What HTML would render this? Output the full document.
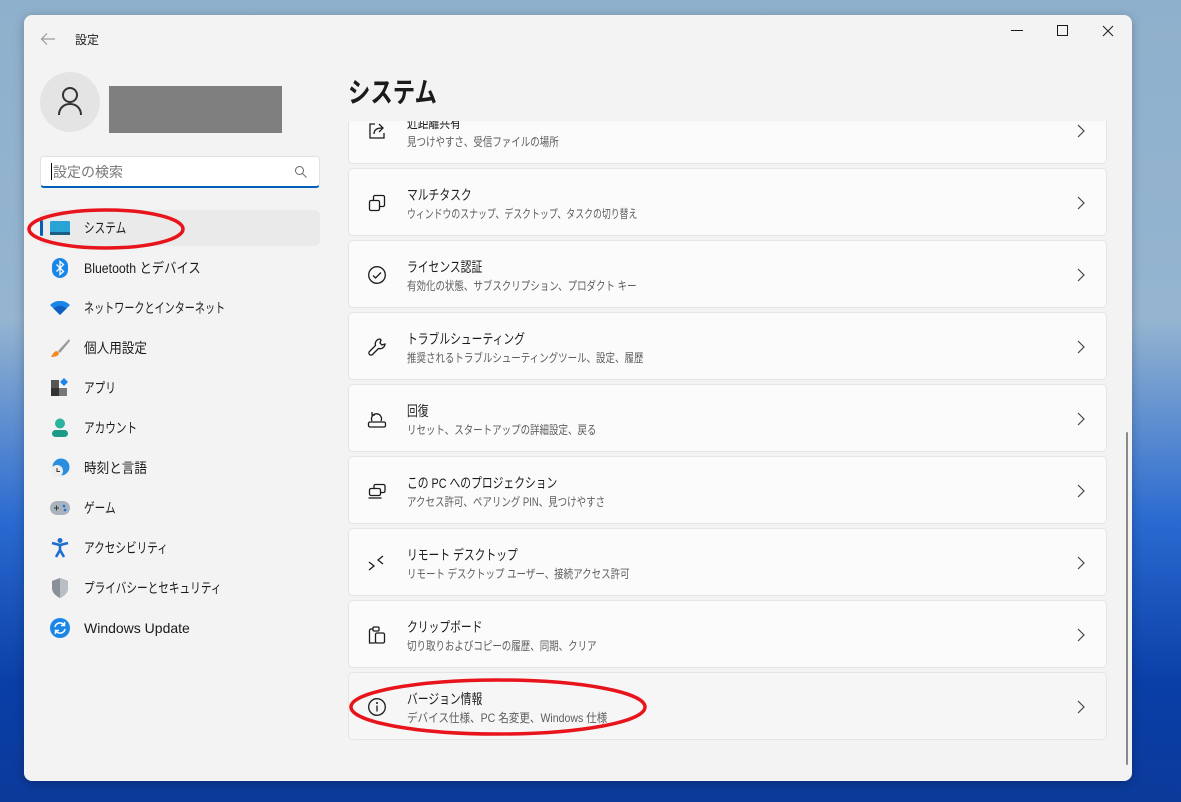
<!DOCTYPE html>
<html><head><meta charset="utf-8"><style>
*{margin:0;padding:0;box-sizing:border-box}
body{width:1181px;height:802px;overflow:hidden;position:relative;font-family:"Liberation Sans","Noto Sans CJK JP",sans-serif;color:#1b1b1b;
background:linear-gradient(180deg,#8fb0cc 0%,#94b4d0 40%,#2a6ad0 65%,#0a3fa8 85%,#0b3a9a 100%)}
.win{position:absolute;left:24px;top:15px;width:1108px;height:766px;background:#f3f3f3;border-radius:8px;overflow:hidden;box-shadow:0 2px 10px rgba(0,0,0,.25)}
.abs{position:absolute}
.n{display:inline-block;white-space:nowrap;transform-origin:0 50%}
.nav{position:absolute;left:16px;width:280px;height:36px;display:flex;align-items:center;font-size:14px}
.nav .ic{width:20px;height:20px;margin-left:10px;margin-right:14px;display:flex;align-items:center;justify-content:center}
.nav .n{transform:scaleX(.76)}
.card{position:absolute;left:324px;width:759px;height:68px;background:#fbfbfb;border:1px solid #e5e5e5;border-radius:5px}
.card .t{position:absolute;left:58px;top:16px;font-size:14px;color:#1b1b1b;transform:scaleX(.77)}
.card .s{position:absolute;left:58px;top:36px;font-size:12px;color:#5d5d5d;transform:scaleX(.79)}
.card svg.i{position:absolute;left:18px;top:24px}
.card .ch{position:absolute;left:728px;top:27px}
</style></head><body>
<div class="win">
  <svg class="abs" style="left:16px;top:17px" width="16" height="14" viewBox="0 0 16 14"><path d="M15 7H2M7 1.5L1.5 7 7 12.5" stroke="#9a9a9a" stroke-width="1.2" fill="none"/></svg>
  <div class="abs" style="left:51px;top:16px;font-size:12px">設定</div>
  <svg class="abs" style="left:987px;top:15px" width="12" height="2"><rect width="12" height="1" fill="#1b1b1b"/></svg>
  <svg class="abs" style="left:1033px;top:10px" width="12" height="12"><rect x=".5" y=".5" width="10" height="10" fill="none" stroke="#1b1b1b" stroke-width="1"/></svg>
  <svg class="abs" style="left:1078px;top:10px" width="12" height="12"><path d="M1 1l10 10M11 1L1 11" stroke="#1b1b1b" stroke-width="1"/></svg>

  <div class="abs" style="left:16px;top:57px;width:60px;height:60px;border-radius:50%;background:#e4e4e4"></div>
  <svg class="abs" style="left:33px;top:71px" width="26" height="30" viewBox="0 0 26 30"><circle cx="13" cy="9" r="7" fill="none" stroke="#333" stroke-width="2"/><path d="M2 29c0-7 5-11 11-11s11 4 11 11" fill="none" stroke="#333" stroke-width="2"/></svg>
  <div class="abs" style="left:85px;top:71px;width:173px;height:47px;background:#7f7f7f"></div>

  <div class="abs" style="left:16px;top:141px;width:280px;height:32px;background:#fff;border:1px solid #e2e2e2;border-bottom:2px solid #005fb8;border-radius:4px"></div>
  <div class="abs" style="left:27px;top:148px;width:1px;height:17px;background:#000"></div>
  <div class="abs" style="left:29px;top:147px;font-size:14px;color:#777">設定の検索</div>
  <svg class="abs" style="left:270px;top:150px" width="14" height="14"><circle cx="5.5" cy="5.5" r="4" fill="none" stroke="#666" stroke-width="1"/><path d="M8.5 8.5l4 4" stroke="#666"/></svg>

  <div class="abs" style="left:16px;top:195px;width:280px;height:36px;background:#eaeaea;border-radius:5px"></div>
  <div class="abs" style="left:16px;top:205px;width:3px;height:16px;background:#005fb8;border-radius:2px"></div>

  <div class="nav" style="top:195px"><span class="ic"><svg width="20" height="14"><rect width="20" height="14" rx="1.5" fill="#29a3d6"/><rect y="11" width="20" height="3" fill="#1b5f86"/></svg></span><span class="n">システム</span></div>
  <div class="nav" style="top:235px"><span class="ic"><svg width="16" height="20" viewBox="0 0 16 20"><rect width="16" height="20" rx="8" fill="#1a86e8"/><path d="M4.5 6.5l7 7-3.5 3V3.5l3.5 3-7 7" stroke="#fff" stroke-width="1.3" fill="none"/></svg></span><span class="n" style="transform:scaleX(.88)">Bluetooth とデバイス</span></div>
  <div class="nav" style="top:275px"><span class="ic"><svg width="20" height="14" viewBox="0 0 20 14"><path d="M10 14L0 4a14 14 0 0120 0z" fill="#1a86e8"/><path d="M10 14L3.5 7.5a9 9 0 0113 0z" fill="#0f5fbf"/></svg></span><span class="n" style="transform:scaleX(.72)">ネットワークとインターネット</span></div>
  <div class="nav" style="top:315px"><span class="ic"><svg width="20" height="20"><path d="M19 1L8 13l2 2L20 3z" fill="#9a9a9a"/><path d="M7 13c-3 0-4 3-6 6 4 0 8-1 8-4z" fill="#f08a20"/></svg></span><span class="n" style="transform:scaleX(.9)">個人用設定</span></div>
  <div class="nav" style="top:355px"><span class="ic"><svg width="20" height="20"><rect x="1" y="2" width="8" height="8" fill="#555"/><rect x="1" y="10" width="8" height="8" fill="#333"/><rect x="9" y="10" width="8" height="8" fill="#777"/><path d="M14 0l4 4-4 4-4-4z" fill="#1a86e8"/></svg></span><span class="n">アプリ</span></div>
  <div class="nav" style="top:395px"><span class="ic"><svg width="18" height="20"><circle cx="9" cy="5.5" r="5" fill="#2bb3a0"/><rect x="1" y="12" width="16" height="7" rx="3.5" fill="#1c9a88"/></svg></span><span class="n">アカウント</span></div>
  <div class="nav" style="top:435px"><span class="ic"><svg width="20" height="20"><circle cx="11" cy="9" r="8.5" fill="#2a8ee0"/><circle cx="7" cy="13" r="6" fill="#eee"/><path d="M7 10v3.5h3" stroke="#333" fill="none"/></svg></span><span class="n" style="transform:scaleX(.9)">時刻と言語</span></div>
  <div class="nav" style="top:475px"><span class="ic"><svg width="20" height="14"><rect width="20" height="14" rx="7" fill="#a9b3bd"/><path d="M4 7h5M6.5 4.5v5" stroke="#333"/><circle cx="14" cy="5" r="1.3" fill="#1a6fd0"/><circle cx="15" cy="9" r="1.3" fill="#1a6fd0"/></svg></span><span class="n">ゲーム</span></div>
  <div class="nav" style="top:515px"><span class="ic"><svg width="18" height="20"><circle cx="9" cy="2.5" r="2.5" fill="#1a6fd0"/><path d="M1 5l8 2 8-2M9 7v5l-4 7M9 12l4 7" stroke="#1a6fd0" stroke-width="2.6" fill="none"/></svg></span><span class="n">アクセシビリティ</span></div>
  <div class="nav" style="top:555px"><span class="ic"><svg width="18" height="20"><path d="M9 0L1 3v7c0 5 4 8 8 10 4-2 8-5 8-10V3z" fill="#8a9099"/><path d="M9 0v20c4-2 8-5 8-10V3z" fill="#b9bec4"/></svg></span><span class="n">プライバシーとセキュリティ</span></div>
  <div class="nav" style="top:595px"><span class="ic"><svg width="20" height="20"><circle cx="10" cy="10" r="10" fill="#1a86e8"/><path d="M5 9a5 5 0 019-2M15 11a5 5 0 01-9 2" stroke="#fff" stroke-width="1.5" fill="none"/><path d="M14.5 4v3.5H11M5.5 16v-3.5H9" stroke="#fff" stroke-width="1.5" fill="none"/></svg></span><span class="n" style="transform:none">Windows Update</span></div>

  <div class="abs n" style="left:324px;top:56px;font-size:28px;font-weight:bold;transform:scaleX(.8)">システム</div>

  <div class="abs" style="left:0;top:106px;width:1108px;height:660px;overflow:hidden">
    <div class="card" style="top:-25px"><svg class="i" width="20" height="20" viewBox="0 0 20 20"><path d="M8 3H3v14h14v-5" stroke="#1b1b1b" stroke-width="1.3" fill="none"/><path d="M7 13c0-4 3-6 8-6M12 3l4 4-4 4" stroke="#1b1b1b" stroke-width="1.3" fill="none"/></svg><div class="t n">近距離共有</div><div class="s n">見つけやすさ、受信ファイルの場所</div><svg class="ch" width="8" height="14"><path d="M1 1l6 6-6 6" stroke="#444" stroke-width="1.2" fill="none"/></svg></div>
    <div class="card" style="top:47px"><svg class="i" width="20" height="20"><rect x="2.5" y="7.5" width="10" height="10" rx="1.5" fill="none" stroke="#1b1b1b" stroke-width="1.3"/><path d="M6.5 7.5V4a1.5 1.5 0 011.5-1.5h8A1.5 1.5 0 0117.5 4v8a1.5 1.5 0 01-1.5 1.5h-3.5" fill="none" stroke="#1b1b1b" stroke-width="1.3"/></svg><div class="t n">マルチタスク</div><div class="s n" style="transform:scaleX(.74)">ウィンドウのスナップ、デスクトップ、タスクの切り替え</div><svg class="ch" width="8" height="14"><path d="M1 1l6 6-6 6" stroke="#444" stroke-width="1.2" fill="none"/></svg></div>
    <div class="card" style="top:119px"><svg class="i" width="20" height="20"><circle cx="10" cy="10" r="8.3" fill="none" stroke="#1b1b1b" stroke-width="1.3"/><path d="M6 10.5l2.5 2.5L14 7.5" fill="none" stroke="#1b1b1b" stroke-width="1.3"/></svg><div class="t n">ライセンス認証</div><div class="s n">有効化の状態、サブスクリプション、プロダクト キー</div><svg class="ch" width="8" height="14"><path d="M1 1l6 6-6 6" stroke="#444" stroke-width="1.2" fill="none"/></svg></div>
    <div class="card" style="top:191px"><svg class="i" width="20" height="20"><path d="M13 2a5 5 0 00-4.5 6.5L2.5 14.5a2 2 0 003 3l6-6A5 5 0 0018 7l-3 1-2-2 1-3z" fill="none" stroke="#1b1b1b" stroke-width="1.3"/></svg><div class="t n">トラブルシューティング</div><div class="s n">推奨されるトラブルシューティングツール、設定、履歴</div><svg class="ch" width="8" height="14"><path d="M1 1l6 6-6 6" stroke="#444" stroke-width="1.2" fill="none"/></svg></div>
    <div class="card" style="top:263px"><svg class="i" width="20" height="20"><rect x="1.5" y="13" width="17" height="5" rx="1.5" fill="none" stroke="#1b1b1b" stroke-width="1.3"/><path d="M5 12a5 5 0 119 0M5 3v3h3" fill="none" stroke="#1b1b1b" stroke-width="1.3"/></svg><div class="t n">回復</div><div class="s n">リセット、スタートアップの詳細設定、戻る</div><svg class="ch" width="8" height="14"><path d="M1 1l6 6-6 6" stroke="#444" stroke-width="1.2" fill="none"/></svg></div>
    <div class="card" style="top:335px"><svg class="i" width="20" height="20"><rect x="7" y="3.5" width="11" height="8" rx="1.5" fill="none" stroke="#1b1b1b" stroke-width="1.3"/><rect x="2.5" y="7.5" width="11" height="7" rx="1.5" fill="#fbfbfb" stroke="#1b1b1b" stroke-width="1.3"/><path d="M1.5 17h13" stroke="#1b1b1b" stroke-width="1.3"/></svg><div class="t n">この PC へのプロジェクション</div><div class="s n">アクセス許可、ペアリング PIN、見つけやすさ</div><svg class="ch" width="8" height="14"><path d="M1 1l6 6-6 6" stroke="#444" stroke-width="1.2" fill="none"/></svg></div>
    <div class="card" style="top:407px"><svg class="i" width="20" height="20"><path d="M2 9l5 4-5 4M16 3l-5 4 5 4" fill="none" stroke="#1b1b1b" stroke-width="1.3"/></svg><div class="t n">リモート デスクトップ</div><div class="s n">リモート デスクトップ ユーザー、接続アクセス許可</div><svg class="ch" width="8" height="14"><path d="M1 1l6 6-6 6" stroke="#444" stroke-width="1.2" fill="none"/></svg></div>
    <div class="card" style="top:479px"><svg class="i" width="20" height="20"><path d="M6 4H4a1.5 1.5 0 00-1.5 1.5V18h6" fill="none" stroke="#1b1b1b" stroke-width="1.3"/><rect x="6" y="2" width="6" height="4" rx="1" fill="none" stroke="#1b1b1b" stroke-width="1.3"/><rect x="8.5" y="8" width="9" height="10" rx="1.5" fill="none" stroke="#1b1b1b" stroke-width="1.3"/></svg><div class="t n">クリップボード</div><div class="s n">切り取りおよびコピーの履歴、同期、クリア</div><svg class="ch" width="8" height="14"><path d="M1 1l6 6-6 6" stroke="#444" stroke-width="1.2" fill="none"/></svg></div>
    <div class="card" style="top:551px;background:#f6f6f6"><svg class="i" width="20" height="20"><circle cx="10" cy="10" r="8.3" fill="none" stroke="#1b1b1b" stroke-width="1.3"/><path d="M10 8.5v6" stroke="#1b1b1b" stroke-width="1.3"/><circle cx="10" cy="6" r="1" fill="#1b1b1b"/></svg><div class="t n">バージョン情報</div><div class="s n" style="transform:scaleX(.88)">デバイス仕様、PC 名変更、Windows 仕様</div><svg class="ch" width="8" height="14"><path d="M1 1l6 6-6 6" stroke="#444" stroke-width="1.2" fill="none"/></svg></div>
  </div>
  <div class="abs" style="left:1102px;top:417px;width:2px;height:333px;background:#8a8a8a;border-radius:1px"></div>
</div>
<svg class="abs" style="left:0;top:0" width="1181" height="802"><ellipse cx="106" cy="229" rx="77" ry="19" fill="none" stroke="#e8141c" stroke-width="3.5"/><ellipse cx="498" cy="707" rx="147" ry="27" fill="none" stroke="#e8141c" stroke-width="3.5"/></svg>
</body></html>
